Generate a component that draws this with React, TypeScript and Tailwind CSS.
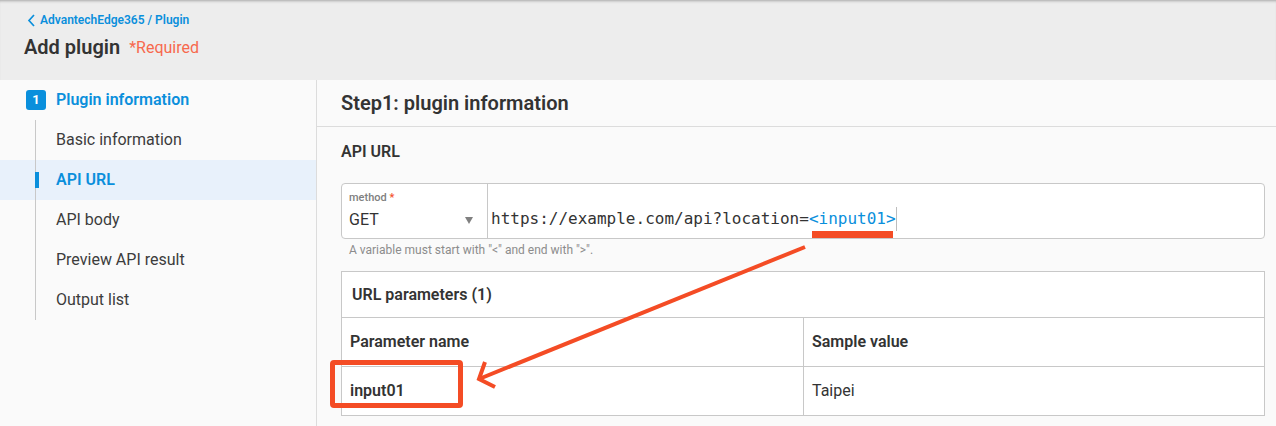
import React from "react";

const substeps = ["Basic information", "API URL", "API body", "Preview API result", "Output list"];

function Sidebar() {
  return (
    <aside className="w-[317px] shrink-0 border-r border-[#dcdcdc]">
      <div className="flex h-10 items-center pl-[26px]">
        <span className="flex h-5 w-5 items-center justify-center rounded-[3px] bg-[#0a8fdc] text-[13px] font-bold text-white">
          1
        </span>
        <span className="ml-[10px] text-[16px] font-semibold text-[#0a8fdc]">Plugin information</span>
      </div>
      <div className="relative">
        <div className="absolute bottom-0 left-[35px] top-0 w-px bg-[#c8c8c8]" />
        {substeps.map((s) => {
          const active = s === "API URL";
          return (
            <div
              key={s}
              className={
                active
                  ? "flex h-10 items-center bg-[#e8f1fb] pl-[56px] text-[16px] font-semibold text-[#0a8fdc]"
                  : "flex h-10 items-center pl-[56px] text-[16px] text-[#3c3c3c]"
              }
            >
              {active && <span className="absolute left-[35px] h-4 w-1 bg-[#0a8fdc]" />}
              {s}
            </div>
          );
        })}
      </div>
    </aside>
  );
}

function UrlField() {
  return (
    <div className="flex h-[56px] rounded-[4px] border border-[#c8c8c8] bg-white">
      <div className="w-[146px] shrink-0 border-r border-[#c8c8c8] pl-[7px] pt-[7px]">
        <div className="text-[11px] font-medium leading-[14px] text-[#808080]">
          method <span className="text-[#f4502a]">*</span>
        </div>
        <div className="mt-[3px] flex items-center justify-between pr-[14px] text-[16px] leading-[24px] text-[#333333]">
          GET
          <span className="h-0 w-0 border-x-[4px] border-t-[7px] border-x-transparent border-t-[#808080]" />
        </div>
      </div>
      <div className="flex flex-1 items-end pb-[7px] pl-[3px] font-['DejaVu_Sans_Mono',monospace] text-[16px] leading-[24px] text-[#333333]">
        https://example.com/api?location=
        <span className="text-[#0a8fdc]">&lt;input01&gt;</span>
        <span className="h-6 w-px bg-[#bdbdbd]" />
      </div>
    </div>
  );
}

function ParamTable() {
  return (
    <div className="mt-[14px] border border-[#c8c8c8] bg-white text-[16px] text-[#333333]">
      <div className="flex h-[45px] items-center pl-[10px] font-semibold">URL parameters (1)</div>
      <div className="flex h-[49px] border-t border-[#c8c8c8] font-semibold">
        <div className="flex w-[462px] items-center border-r border-[#c8c8c8] pl-2">Parameter name</div>
        <div className="flex flex-1 items-center pl-2">Sample value</div>
      </div>
      <div className="flex h-[49px] border-t border-[#c8c8c8]">
        <div className="flex w-[462px] items-center border-r border-[#c8c8c8] pl-2 font-semibold">input01</div>
        <div className="flex flex-1 items-center pl-2">Taipei</div>
      </div>
    </div>
  );
}

export default function App() {
  return (
    <div className="relative h-[426px] w-[1276px] overflow-hidden bg-[#fafafa] font-['Roboto',sans-serif]">
      <header className="h-20 bg-[#ededed] pl-6 pt-[13px] shadow-[inset_0_3px_3px_-2px_rgba(0,0,0,0.3)]">
        <div className="flex h-[14px] items-center text-[12px] font-semibold text-[#0a8fdc]">
          <svg width="9" height="13" viewBox="0 0 9 13" className="ml-[3px] mr-[4px]" fill="none">
            <path d="M7 1 L2 6.5 L7 12" stroke="#0a8fdc" strokeWidth="1.7" />
          </svg>
          AdvantechEdge365 / Plugin
        </div>
        <div className="mt-[5px] flex items-baseline">
          <span className="text-[20px] font-semibold text-[#333333]">Add plugin</span>
          <span className="ml-[9px] -translate-y-px text-[16px] text-[#f7694d]">*Required</span>
        </div>
      </header>

      <div className="flex h-[346px]">
        <Sidebar />
        <main className="flex-1">
          <div className="flex h-[47px] items-center border-b border-[#dcdcdc] pl-6 text-[20px] font-semibold text-[#333333]">
            Step1: plugin information
          </div>
          <div className="pl-6 pr-[11px]">
            <div className="flex h-[50px] items-center text-[16px] font-semibold text-[#333333]">API URL</div>
            <div className="mt-[6px]">
              <UrlField />
            </div>
            <div className="mt-[4px] h-[14px] pl-2 text-[12px] leading-[14px] text-[#8c8c8c]">
              A variable must start with "&lt;" and end with "&gt;".
            </div>
            <ParamTable />
          </div>
        </main>
      </div>

      {/* annotation overlay */}
      <svg className="absolute left-0 top-0" width="1276" height="426" fill="none">
        <rect x="812" y="231" width="81" height="7" fill="#f44c25" />
        <path d="M805 247 L479 379" stroke="#f44c25" strokeWidth="4" />
        <path d="M485 362 L479 379 L495 387" stroke="#f44c25" strokeWidth="4" />
      </svg>
      <div className="absolute left-[330px] top-[360px] h-[48px] w-[133px] rounded-[4px] border-[5px] border-[#f44c25]" />
    </div>
  );
}
